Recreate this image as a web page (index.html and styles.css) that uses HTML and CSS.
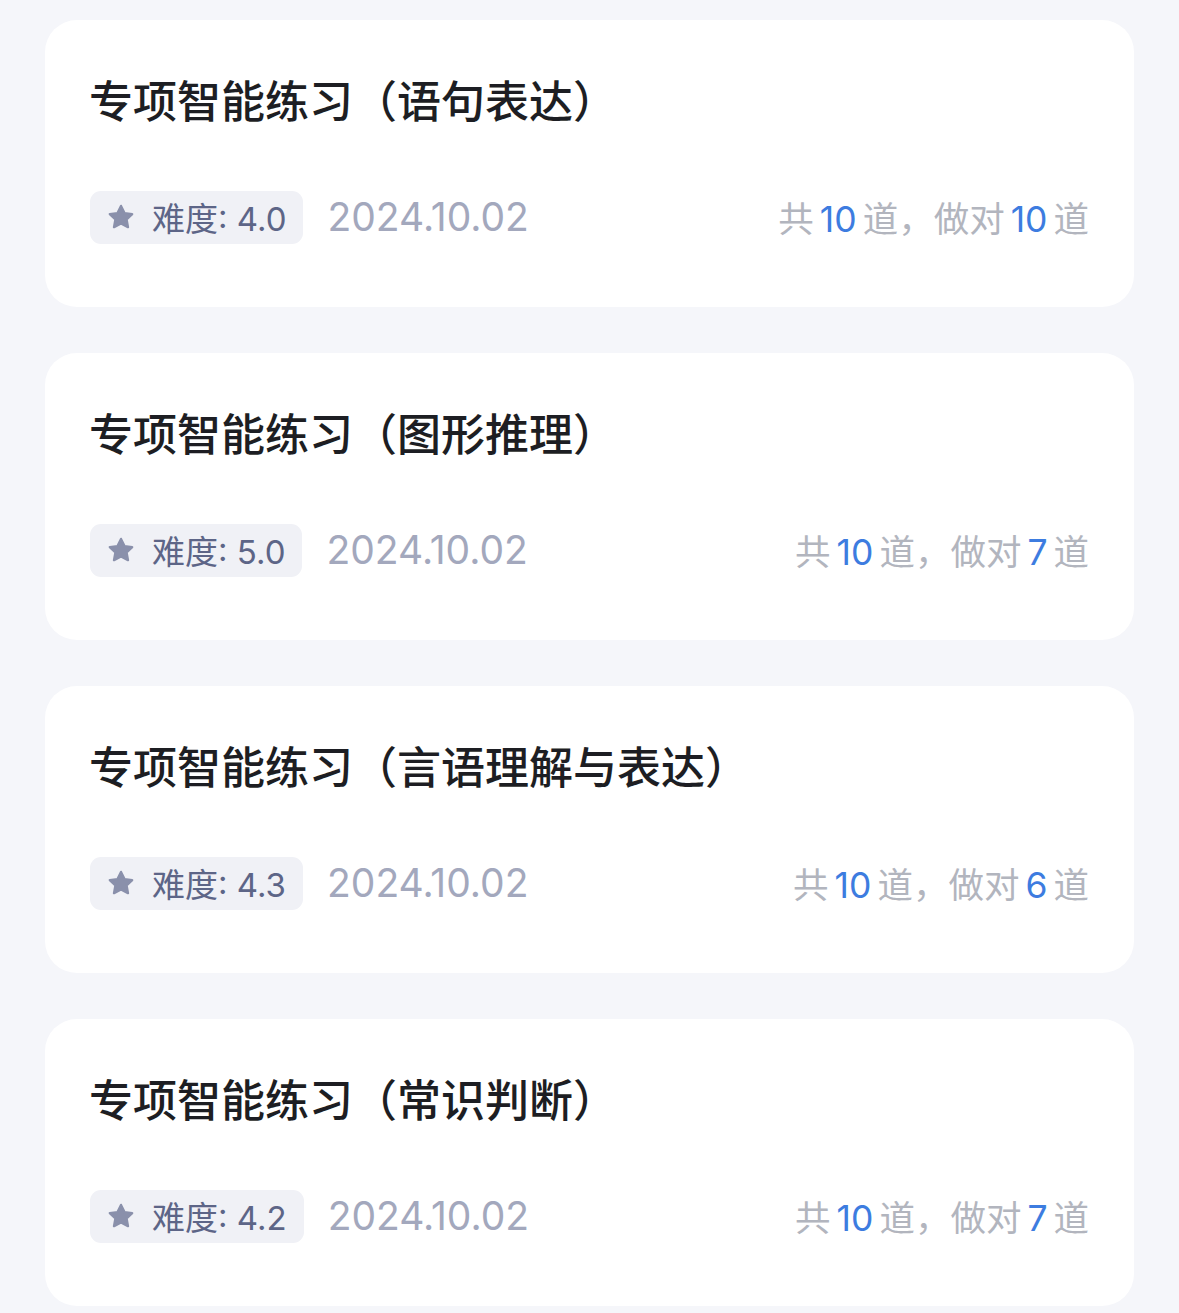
FILE: index.html
```html
<!DOCTYPE html>
<html lang="zh-CN">
<head>
   <meta charset="UTF-8" />
   <meta name="viewport" content="width=device-width, initial-scale=1.0"/>
   <title>练习记录</title>
   <link rel="stylesheet" href="styles.css">
</head>
<body>

   <div class="list">
      <div class="card">
         <h3 class="title">专项智能练习（语句表达）</h3>
         <div class="meta">
            <span class="level">
               <svg class="star" viewBox="0 0 24 24"><polygon points="12 2.5 15 8.6 21.6 9.5 16.8 14.1 18 20.7 12 17.5 6 20.7 7.2 14.1 2.4 9.5 9 8.6"/></svg>
               难度: 4.0
            </span>
            <span class="date">2024.10.02</span>
            <span class="count">共<b>10</b>道，做对<b>10</b>道</span>
         </div>
      </div>

      <div class="card">
         <h3 class="title">专项智能练习（图形推理）</h3>
         <div class="meta">
            <span class="level">
               <svg class="star" viewBox="0 0 24 24"><polygon points="12 2.5 15 8.6 21.6 9.5 16.8 14.1 18 20.7 12 17.5 6 20.7 7.2 14.1 2.4 9.5 9 8.6"/></svg>
               难度: 5.0
            </span>
            <span class="date">2024.10.02</span>
            <span class="count">共<b>10</b>道，做对<b>7</b>道</span>
         </div>
      </div>

      <div class="card">
         <h3 class="title">专项智能练习（言语理解与表达）</h3>
         <div class="meta">
            <span class="level">
               <svg class="star" viewBox="0 0 24 24"><polygon points="12 2.5 15 8.6 21.6 9.5 16.8 14.1 18 20.7 12 17.5 6 20.7 7.2 14.1 2.4 9.5 9 8.6"/></svg>
               难度: 4.3
            </span>
            <span class="date">2024.10.02</span>
            <span class="count">共<b>10</b>道，做对<b>6</b>道</span>
         </div>
      </div>

      <div class="card">
         <h3 class="title">专项智能练习（常识判断）</h3>
         <div class="meta">
            <span class="level">
               <svg class="star" viewBox="0 0 24 24"><polygon points="12 2.5 15 8.6 21.6 9.5 16.8 14.1 18 20.7 12 17.5 6 20.7 7.2 14.1 2.4 9.5 9 8.6"/></svg>
               难度: 4.2
            </span>
            <span class="date">2024.10.02</span>
            <span class="count">共<b>10</b>道，做对<b>7</b>道</span>
         </div>
      </div>
   </div>

</body>
</html>
```

FILE: styles.css
```css
* {
   margin: 0;
   padding: 0;
   box-sizing: border-box;
}
body {
   background: #f5f6fa;
   font-family: Inter, "Noto Sans CJK SC", sans-serif;
}
.list {
   display: flex;
   flex-direction: column;
   gap: 46px;
   padding: 20px 45px;
}
.card {
   background: #fff;
   border-radius: 32px;
   height: 287px;
   padding: 49px 45px 0 45px;
}
.title {
   font-family: "Noto Sans CJK SC", sans-serif;
   font-size: 44px;
   line-height: 60px;
   font-weight: 500;
   color: #1d1e23;
   margin-left: -1px;
}
.meta {
   display: flex;
   align-items: center;
   margin-top: 62px;
}
.level {
   display: flex;
   align-items: center;
   height: 53px;
   padding: 0 17px 2px 17px;
   background: #f0f1f6;
   border-radius: 11px;
   font-size: 33px;
   color: #5d6587;
}
.star {
   width: 28px;
   height: 28px;
   margin-right: 17px;
   fill: #8a90ab;
   stroke: #8a90ab;
   stroke-width: 2;
   stroke-linejoin: round;
}
.date {
   margin-left: 24px;
   padding-bottom: 3px;
   font-size: 39px;
   color: #a3a8bd;
}
.count {
   margin-left: auto;
   padding-bottom: 2px;
   font-size: 35.5px;
   color: #b2b5be;
}
.count b {
   font-weight: 400;
   color: #3d7ce0;
   margin: 0 6px;
}
```
